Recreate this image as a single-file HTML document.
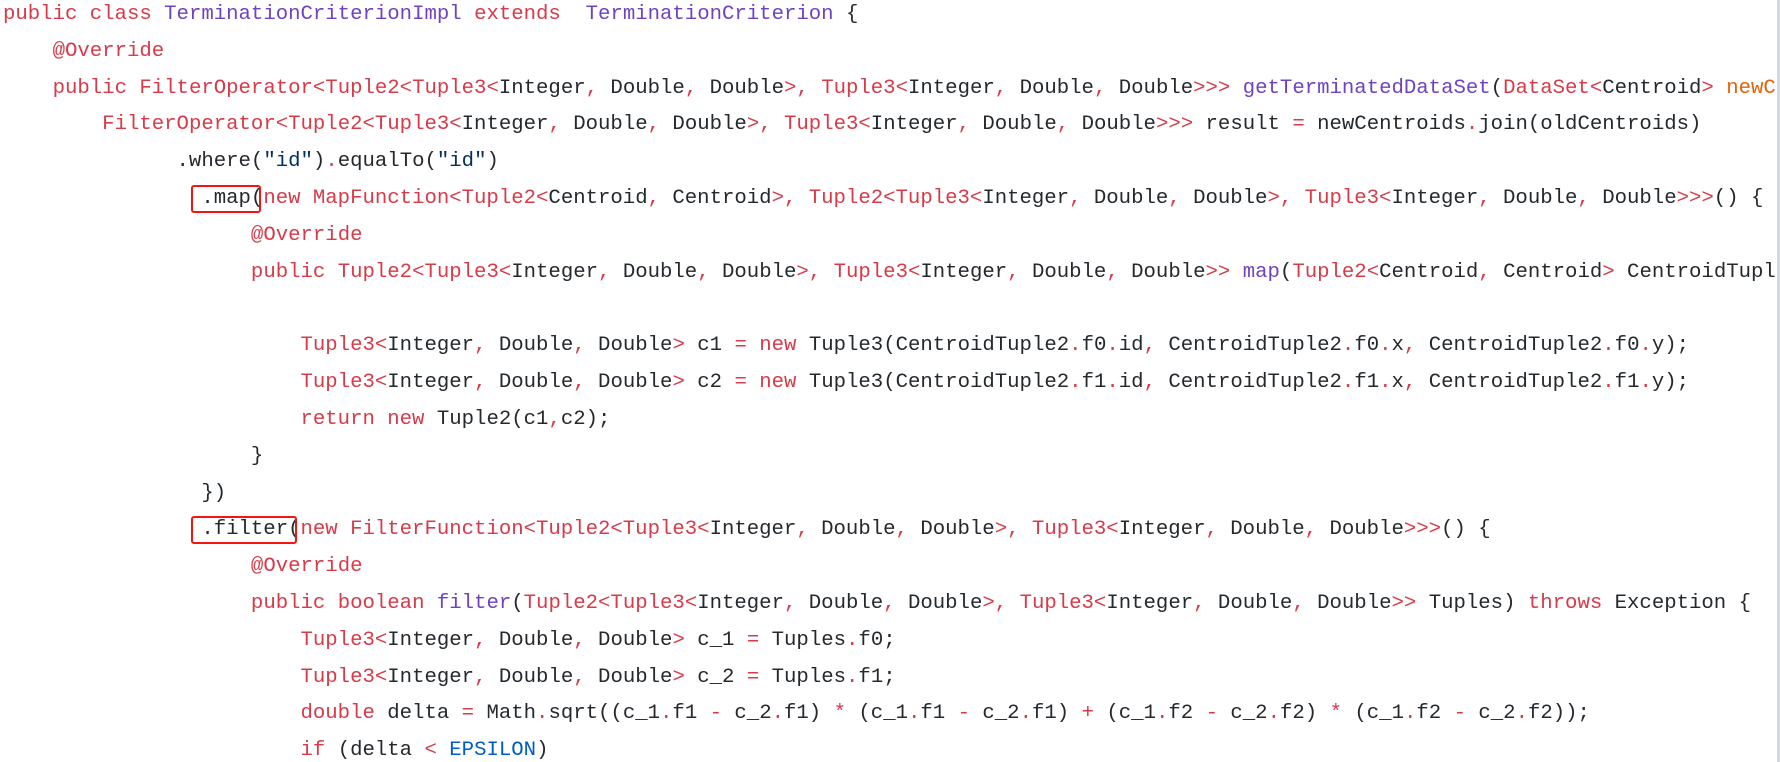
<!DOCTYPE html>
<html><head><meta charset="utf-8"><style>
html,body{margin:0;padding:0;background:#fff;width:1780px;height:762px;overflow:hidden}
#c{position:absolute;left:0;top:0;width:1777px;height:762px;overflow:hidden}
pre{margin:0;position:absolute;left:3px;top:-3px;font-family:"Liberation Mono",monospace;font-size:20.67px;line-height:36.82px;color:#24292e;white-space:pre}
.r{color:#d73a49}.p{color:#6f42c1}.s{color:#032f62}.c{color:#005cc5}.o{color:#e36209}
.box{position:absolute;border:2.5px solid #f5140f;border-radius:3px;box-sizing:border-box}
#bar{position:absolute;left:1777px;top:0;width:3px;height:762px;background:#d5d8dc}
</style></head><body>
<div id="c"><pre><span class="r">public class</span> <span class="p">TerminationCriterionImpl</span> <span class="r">extends</span>  <span class="p">TerminationCriterion</span> {
    <span class="r">@Override</span>
    <span class="r">public FilterOperator&lt;Tuple2&lt;Tuple3&lt;</span>Integer<span class="r">,</span> Double<span class="r">,</span> Double<span class="r">&gt;,</span> <span class="r">Tuple3&lt;</span>Integer<span class="r">,</span> Double<span class="r">,</span> Double<span class="r">&gt;&gt;&gt;</span> <span class="p">getTerminatedDataSet</span>(<span class="r">DataSet&lt;</span>Centroid<span class="r">&gt;</span> <span class="o">newCentroids</span>, <span class="r">DataSet&lt;</span>Centroid<span class="r">&gt;</span> <span class="o">oldCentroids</span>) {
        <span class="r">FilterOperator&lt;Tuple2&lt;Tuple3&lt;</span>Integer<span class="r">,</span> Double<span class="r">,</span> Double<span class="r">&gt;,</span> <span class="r">Tuple3&lt;</span>Integer<span class="r">,</span> Double<span class="r">,</span> Double<span class="r">&gt;&gt;&gt;</span> result <span class="r">=</span> newCentroids<span class="r">.</span>join(oldCentroids)
              .where(<span class="s">"id"</span>)<span class="r">.</span>equalTo(<span class="s">"id"</span>)
                .map(<span class="r">new MapFunction&lt;Tuple2&lt;</span>Centroid<span class="r">,</span> Centroid<span class="r">&gt;,</span> <span class="r">Tuple2&lt;Tuple3&lt;</span>Integer<span class="r">,</span> Double<span class="r">,</span> Double<span class="r">&gt;,</span> <span class="r">Tuple3&lt;</span>Integer<span class="r">,</span> Double<span class="r">,</span> Double<span class="r">&gt;&gt;&gt;</span>() {
                    <span class="r">@Override</span>
                    <span class="r">public Tuple2&lt;Tuple3&lt;</span>Integer<span class="r">,</span> Double<span class="r">,</span> Double<span class="r">&gt;,</span> <span class="r">Tuple3&lt;</span>Integer<span class="r">,</span> Double<span class="r">,</span> Double<span class="r">&gt;&gt;</span> <span class="p">map</span>(<span class="r">Tuple2&lt;</span>Centroid<span class="r">,</span> Centroid<span class="r">&gt;</span> CentroidTuple2) {

                        <span class="r">Tuple3&lt;</span>Integer<span class="r">,</span> Double<span class="r">,</span> Double<span class="r">&gt;</span> c1 <span class="r">=</span> <span class="r">new</span> Tuple3(CentroidTuple2<span class="r">.</span>f0<span class="r">.</span>id<span class="r">,</span> CentroidTuple2<span class="r">.</span>f0<span class="r">.</span>x<span class="r">,</span> CentroidTuple2<span class="r">.</span>f0<span class="r">.</span>y);
                        <span class="r">Tuple3&lt;</span>Integer<span class="r">,</span> Double<span class="r">,</span> Double<span class="r">&gt;</span> c2 <span class="r">=</span> <span class="r">new</span> Tuple3(CentroidTuple2<span class="r">.</span>f1<span class="r">.</span>id<span class="r">,</span> CentroidTuple2<span class="r">.</span>f1<span class="r">.</span>x<span class="r">,</span> CentroidTuple2<span class="r">.</span>f1<span class="r">.</span>y);
                        <span class="r">return new</span> Tuple2(c1<span class="r">,</span>c2);
                    }
                })
                .filter(<span class="r">new FilterFunction&lt;Tuple2&lt;Tuple3&lt;</span>Integer<span class="r">,</span> Double<span class="r">,</span> Double<span class="r">&gt;,</span> <span class="r">Tuple3&lt;</span>Integer<span class="r">,</span> Double<span class="r">,</span> Double<span class="r">&gt;&gt;&gt;</span>() {
                    <span class="r">@Override</span>
                    <span class="r">public boolean</span> <span class="p">filter</span>(<span class="r">Tuple2&lt;Tuple3&lt;</span>Integer<span class="r">,</span> Double<span class="r">,</span> Double<span class="r">&gt;,</span> <span class="r">Tuple3&lt;</span>Integer<span class="r">,</span> Double<span class="r">,</span> Double<span class="r">&gt;&gt;</span> Tuples) <span class="r">throws</span> Exception {
                        <span class="r">Tuple3&lt;</span>Integer<span class="r">,</span> Double<span class="r">,</span> Double<span class="r">&gt;</span> c_1 <span class="r">=</span> Tuples<span class="r">.</span>f0;
                        <span class="r">Tuple3&lt;</span>Integer<span class="r">,</span> Double<span class="r">,</span> Double<span class="r">&gt;</span> c_2 <span class="r">=</span> Tuples<span class="r">.</span>f1;
                        <span class="r">double</span> delta <span class="r">=</span> Math<span class="r">.</span>sqrt((c_1<span class="r">.</span>f1 <span class="r">-</span> c_2<span class="r">.</span>f1) <span class="r">*</span> (c_1<span class="r">.</span>f1 <span class="r">-</span> c_2<span class="r">.</span>f1) <span class="r">+</span> (c_1<span class="r">.</span>f2 <span class="r">-</span> c_2<span class="r">.</span>f2) <span class="r">*</span> (c_1<span class="r">.</span>f2 <span class="r">-</span> c_2<span class="r">.</span>f2));
                        <span class="r">if</span> (delta <span class="r">&lt;</span> <span class="c">EPSILON</span>)
</pre>
<div class="box" style="left:191px;top:185px;width:70px;height:28px"></div>
<div class="box" style="left:191px;top:516px;width:106px;height:28px"></div>
</div>
<div id="bar"></div>
</body></html>
